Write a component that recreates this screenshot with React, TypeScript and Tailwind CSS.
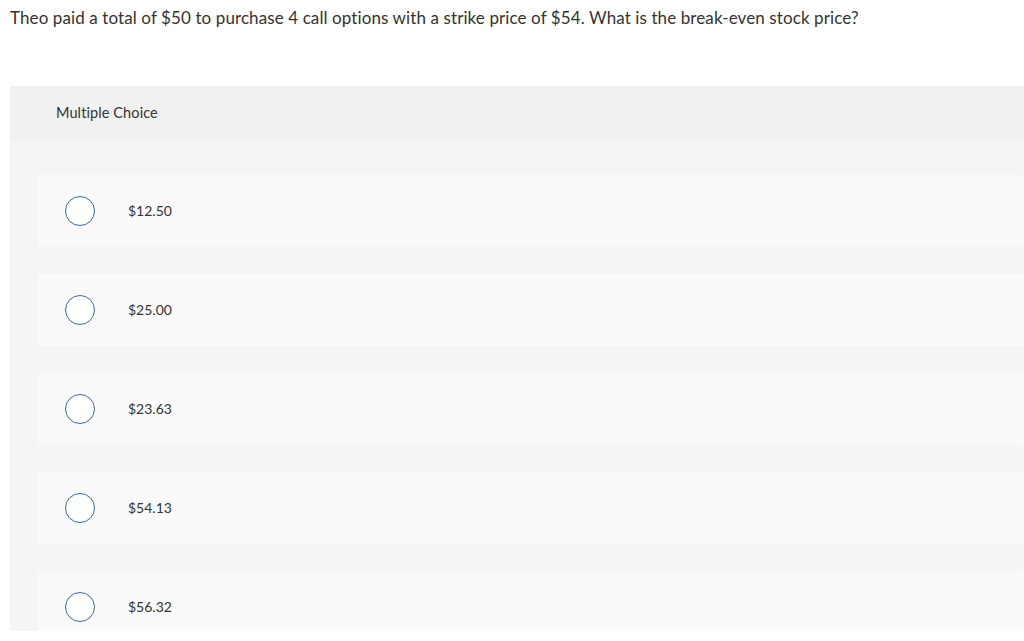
const options = ['$12.50', '$25.00', '$23.63', '$54.13', '$56.32']

export default function App() {
    return (
        <div className="h-[641px] w-[1024px] overflow-hidden bg-white text-[#333]" style={{ fontFamily: 'Lato, "Open Sans", sans-serif' }}>
            <p className="pl-[10px] pt-[7px] text-[17px] leading-[22px] tracking-[0.1px]">
                Theo paid a total of $50 to purchase 4 call options with a strike price of $54. What is the break-even stock price?
            </p>
            <div className="ml-[10px] mt-[57px] h-[545px] overflow-hidden">
                <div className="flex h-[54px] items-center bg-[#f1f1f1] pb-[1px] pl-[46px] text-[14.5px] tracking-[0.1px]">Multiple Choice</div>
                <div className="flex flex-col gap-[27px] bg-[#f5f5f5] pl-[28px] pt-[35px] pb-[10px]">
                    {options.map((o) => (
                        <div key={o} className="flex h-[72px] items-center rounded-sm bg-[#fafafa] pl-[27px]">
                            <span className="h-[30px] w-[30px] rounded-full border border-[#3c659c] bg-white" />
                            <span className="mb-[2px] ml-[33px] text-[14px]">{o}</span>
                        </div>
                    ))}
                </div>
            </div>
        </div>
    )
}
